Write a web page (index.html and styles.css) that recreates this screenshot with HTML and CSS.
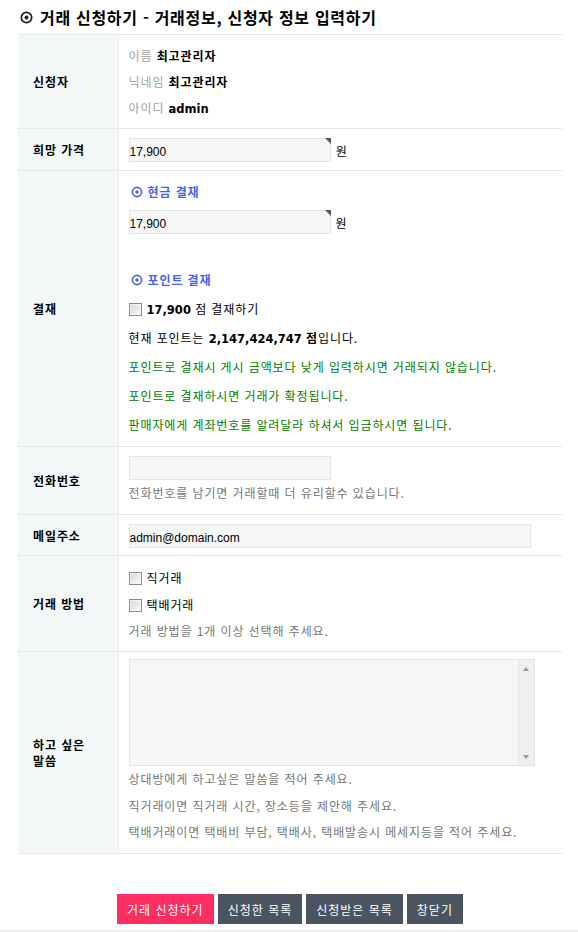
FILE: index.html
```html
<!DOCTYPE html>
<html lang="ko">
<head>
<meta charset="utf-8">
<title>거래 신청하기</title>
<link rel="stylesheet" href="styles.css">
</head>
<body>
<div class="page">
  <h1 class="title">
    <svg class="dot-icon" width="13" height="13" viewBox="0 0 13 13"><circle cx="6.5" cy="6.5" r="5.2" fill="none" stroke="#222" stroke-width="1.7"/><circle cx="6.5" cy="6.5" r="2" fill="#222"/></svg>
    <span>거래 신청하기 - 거래정보, 신청자 정보 입력하기</span>
  </h1>

  <table class="form">
    <tr class="r1">
      <th>신청자</th>
      <td class="info">
        <div class="line"><span class="muted">이름</span> <b>최고관리자</b></div>
        <div class="line"><span class="muted">닉네임</span> <b>최고관리자</b></div>
        <div class="line"><span class="muted">아이디</span> <b class="en">admin</b></div>
      </td>
    </tr>
    <tr class="r2">
      <th>희망 가격</th>
      <td class="pad9">
        <span class="field"><input class="inp short" value="17,900"><i class="req"></i></span> <span class="unit">원</span>
      </td>
    </tr>
    <tr class="r3">
      <th>결재</th>
      <td class="pay">
        <div class="sub">
          <svg width="12" height="12" viewBox="0 0 12 12"><circle cx="6" cy="6" r="4.6" fill="none" stroke="#4463f2" stroke-width="1.6"/><circle cx="6" cy="6" r="1.7" fill="#4463f2"/></svg>
          <span>현금 결재</span>
        </div>
        <div class="row-input"><span class="field"><input class="inp short" value="17,900"><i class="req"></i></span> <span class="unit">원</span></div>
        <div class="sub sub2">
          <svg width="12" height="12" viewBox="0 0 12 12"><circle cx="6" cy="6" r="4.6" fill="none" stroke="#4463f2" stroke-width="1.6"/><circle cx="6" cy="6" r="1.7" fill="#4463f2"/></svg>
          <span>포인트 결재</span>
        </div>
        <div class="pline"><span class="chk"></span><b class="num">17,900</b> 점 결재하기</div>
        <div class="pline">현재 포인트는 <b class="num">2,147,424,747</b> <b>점</b>입니다.</div>
        <div class="pline green">포인트로 결재시 게시 금액보다 낮게 입력하시면 거래되지 않습니다.</div>
        <div class="pline green">포인트로 결재하시면 거래가 확정됩니다.</div>
        <div class="pline green">판매자에게 계좌번호를 알려달라 하셔서 입금하시면 됩니다.</div>
      </td>
    </tr>
    <tr class="r4">
      <th>전화번호</th>
      <td class="phone">
        <input class="inp short">
        <div class="hint hline">전화번호를 남기면 거래할때 더 유리할수 있습니다.</div>
      </td>
    </tr>
    <tr class="r5">
      <th>메일주소</th>
      <td class="pad9">
        <input class="inp long" value="admin@domain.com">
      </td>
    </tr>
    <tr class="r6">
      <th>거래 방법</th>
      <td class="method">
        <div class="mline"><span class="chk"></span>직거래</div>
        <div class="mline"><span class="chk"></span>택배거래</div>
        <div class="mline hint">거래 방법을 1개 이상 선택해 주세요.</div>
      </td>
    </tr>
    <tr class="r7">
      <th class="two">하고 싶은<br>말씀</th>
      <td class="memo">
        <div class="tabox">
          <textarea class="ta"></textarea>
          <div class="sbar"><span class="arr up"></span><span class="arr down"></span></div>
        </div>
        <div class="mline hint">상대방에게 하고싶은 말씀을 적어 주세요.</div>
        <div class="mline hint">직거래이면 직거래 시간, 장소등을 제안해 주세요.</div>
        <div class="mline hint">택배거래이면 택배비 부담, 택배사, 택배발송시 메세지등을 적어 주세요.</div>
      </td>
    </tr>
  </table>

  <div class="buttons">
    <button class="btn primary">거래 신청하기</button>
    <button class="btn">신청한 목록</button>
    <button class="btn">신청받은 목록</button>
    <button class="btn">창닫기</button>
  </div>
</div>
</body>
</html>
```

FILE: styles.css
```css
* { box-sizing: border-box; }
html, body { margin: 0; padding: 0; background: #fff; }
body {
  font-family: "Noto Sans CJK KR", "Noto Sans", sans-serif;
  font-size: 12px;
  color: #000;
}
.page {
  width: 578px;
  height: 932px;
  border-bottom: 2px solid #eeeeee;
}
.title {
  margin: 0;
  padding: 7px 0 0 20px;
  height: 34px;
  font-size: 16px;
  font-weight: bold;
  line-height: 20px;
  letter-spacing: 0.7px;
  display: flex;
  align-items: flex-start;
  gap: 7px;
}
.title .dot-icon { margin-top: 4px; flex: none; }

.form {
  margin-left: 18px;
  width: 544px;
  border-collapse: collapse;
  border-top: 1px solid #e6e6e6;
  letter-spacing: 0.9px;
}
.form tr { border-bottom: 1px solid #e6e6e6; }
.form th {
  width: 100px;
  background: #f3f7f8;
  border-right: 1px solid #e9ecec;
  text-align: left;
  padding: 0 0 0 15px;
  font-size: 12px;
  font-weight: bold;
  line-height: 15px;
  vertical-align: middle;
}
.form th.two { line-height: 16px; }
.form td {
  padding: 0 0 0 10px;
  vertical-align: top;
}
.r1 th, .r1 td { height: 94px; }
.r2 th, .r2 td { height: 42px; }
.r3 th, .r3 td { height: 276px; }
.r4 th, .r4 td { height: 68px; }
.r5 th, .r5 td { height: 41px; }
.r6 th, .r6 td { height: 96px; }
.r7 th, .r7 td { height: 202px; }

.info { padding-top: 8px !important; }
.line { height: 26px; line-height: 26px; }
.muted { color: #a0a0a0; }
b { font-weight: bold; }
.en, .num { font-family: "DejaVu Sans", "Noto Sans", sans-serif; font-size: 11.5px; letter-spacing: 0; }

.pad9 { padding-top: 9px !important; }
.field { position: relative; display: inline-block; vertical-align: middle; }
.req {
  position: absolute;
  top: 0; right: 0;
  width: 0; height: 0;
  border-top: 6px solid #555a50;
  border-left: 6px solid transparent;
}
.inp {
  display: block;
  height: 24px;
  border: 1px solid #e2e4e4;
  background: #f6f6f6;
  font-family: "Liberation Sans", "Noto Sans", sans-serif;
  font-size: 12px;
  padding: 4px 0 0 0;
  margin: 0;
  color: #000;
  outline: none;
}
.short { width: 202px; }
.long { width: 402px; }
.unit { vertical-align: middle; margin-left: 1px; }

.pay { padding-top: 8px !important; }
.sub {
  color: #4463f2;
  font-weight: bold;
  height: 26px;
  line-height: 26px;
  display: flex;
  align-items: center;
  gap: 5px;
  padding-left: 2px;
}
.row-input { margin-top: 5px; display: flex; align-items: center; gap: 4px; }
.sub2 { margin-top: 31px; height: 29px; line-height: 29px; }
.pline { height: 29px; line-height: 29px; white-space: nowrap; }
.green { color: #008000; }
.chk {
  display: inline-block;
  vertical-align: middle;
  position: relative;
  top: -1px;
  width: 13px; height: 13px;
  border: 1px solid #8d8d8d;
  background: linear-gradient(135deg, #d4d4d4 0%, #ececec 60%, #fafafa 100%);
  box-shadow: inset 0 0 0 1px #f4f4f4;
  margin-right: 5px;
}

.phone { padding-top: 9px !important; }
.hint { color: #777; }
.hline { height: 26px; line-height: 26px; }

.method { padding-top: 9px !important; }
.mline { height: 26.5px; line-height: 26.5px; white-space: nowrap; }

.memo { padding-top: 7px !important; }
.tabox {
  width: 406px;
  height: 107px;
  border: 1px solid #e2e4e4;
  background: #f6f6f6;
  display: flex;
}
.ta {
  flex: 1;
  border: 0;
  background: transparent;
  resize: none;
  outline: none;
}
.sbar {
  width: 16px;
  border-left: 1px solid #e4e4e4;
  background: #efefef;
  display: flex;
  flex-direction: column;
  justify-content: space-between;
  align-items: center;
  padding: 7px 0 6px;
}
.arr { width: 0; height: 0; border-left: 3px solid transparent; border-right: 3px solid transparent; }
.arr.up { border-bottom: 4px solid #9a9a9a; }
.arr.down { border-top: 4px solid #9a9a9a; }

.buttons {
  display: flex;
  justify-content: center;
  gap: 4px;
  margin-top: 40px;
  padding-left: 2px;
}
.btn {
  height: 30px;
  border: 0;
  padding: 0 10px;
  background: #4b5461;
  color: #fff;
  font-family: "Noto Sans CJK KR", sans-serif;
  font-size: 12px;
  letter-spacing: 1px;
}
.btn.primary { background: #ff2d62; }
```
